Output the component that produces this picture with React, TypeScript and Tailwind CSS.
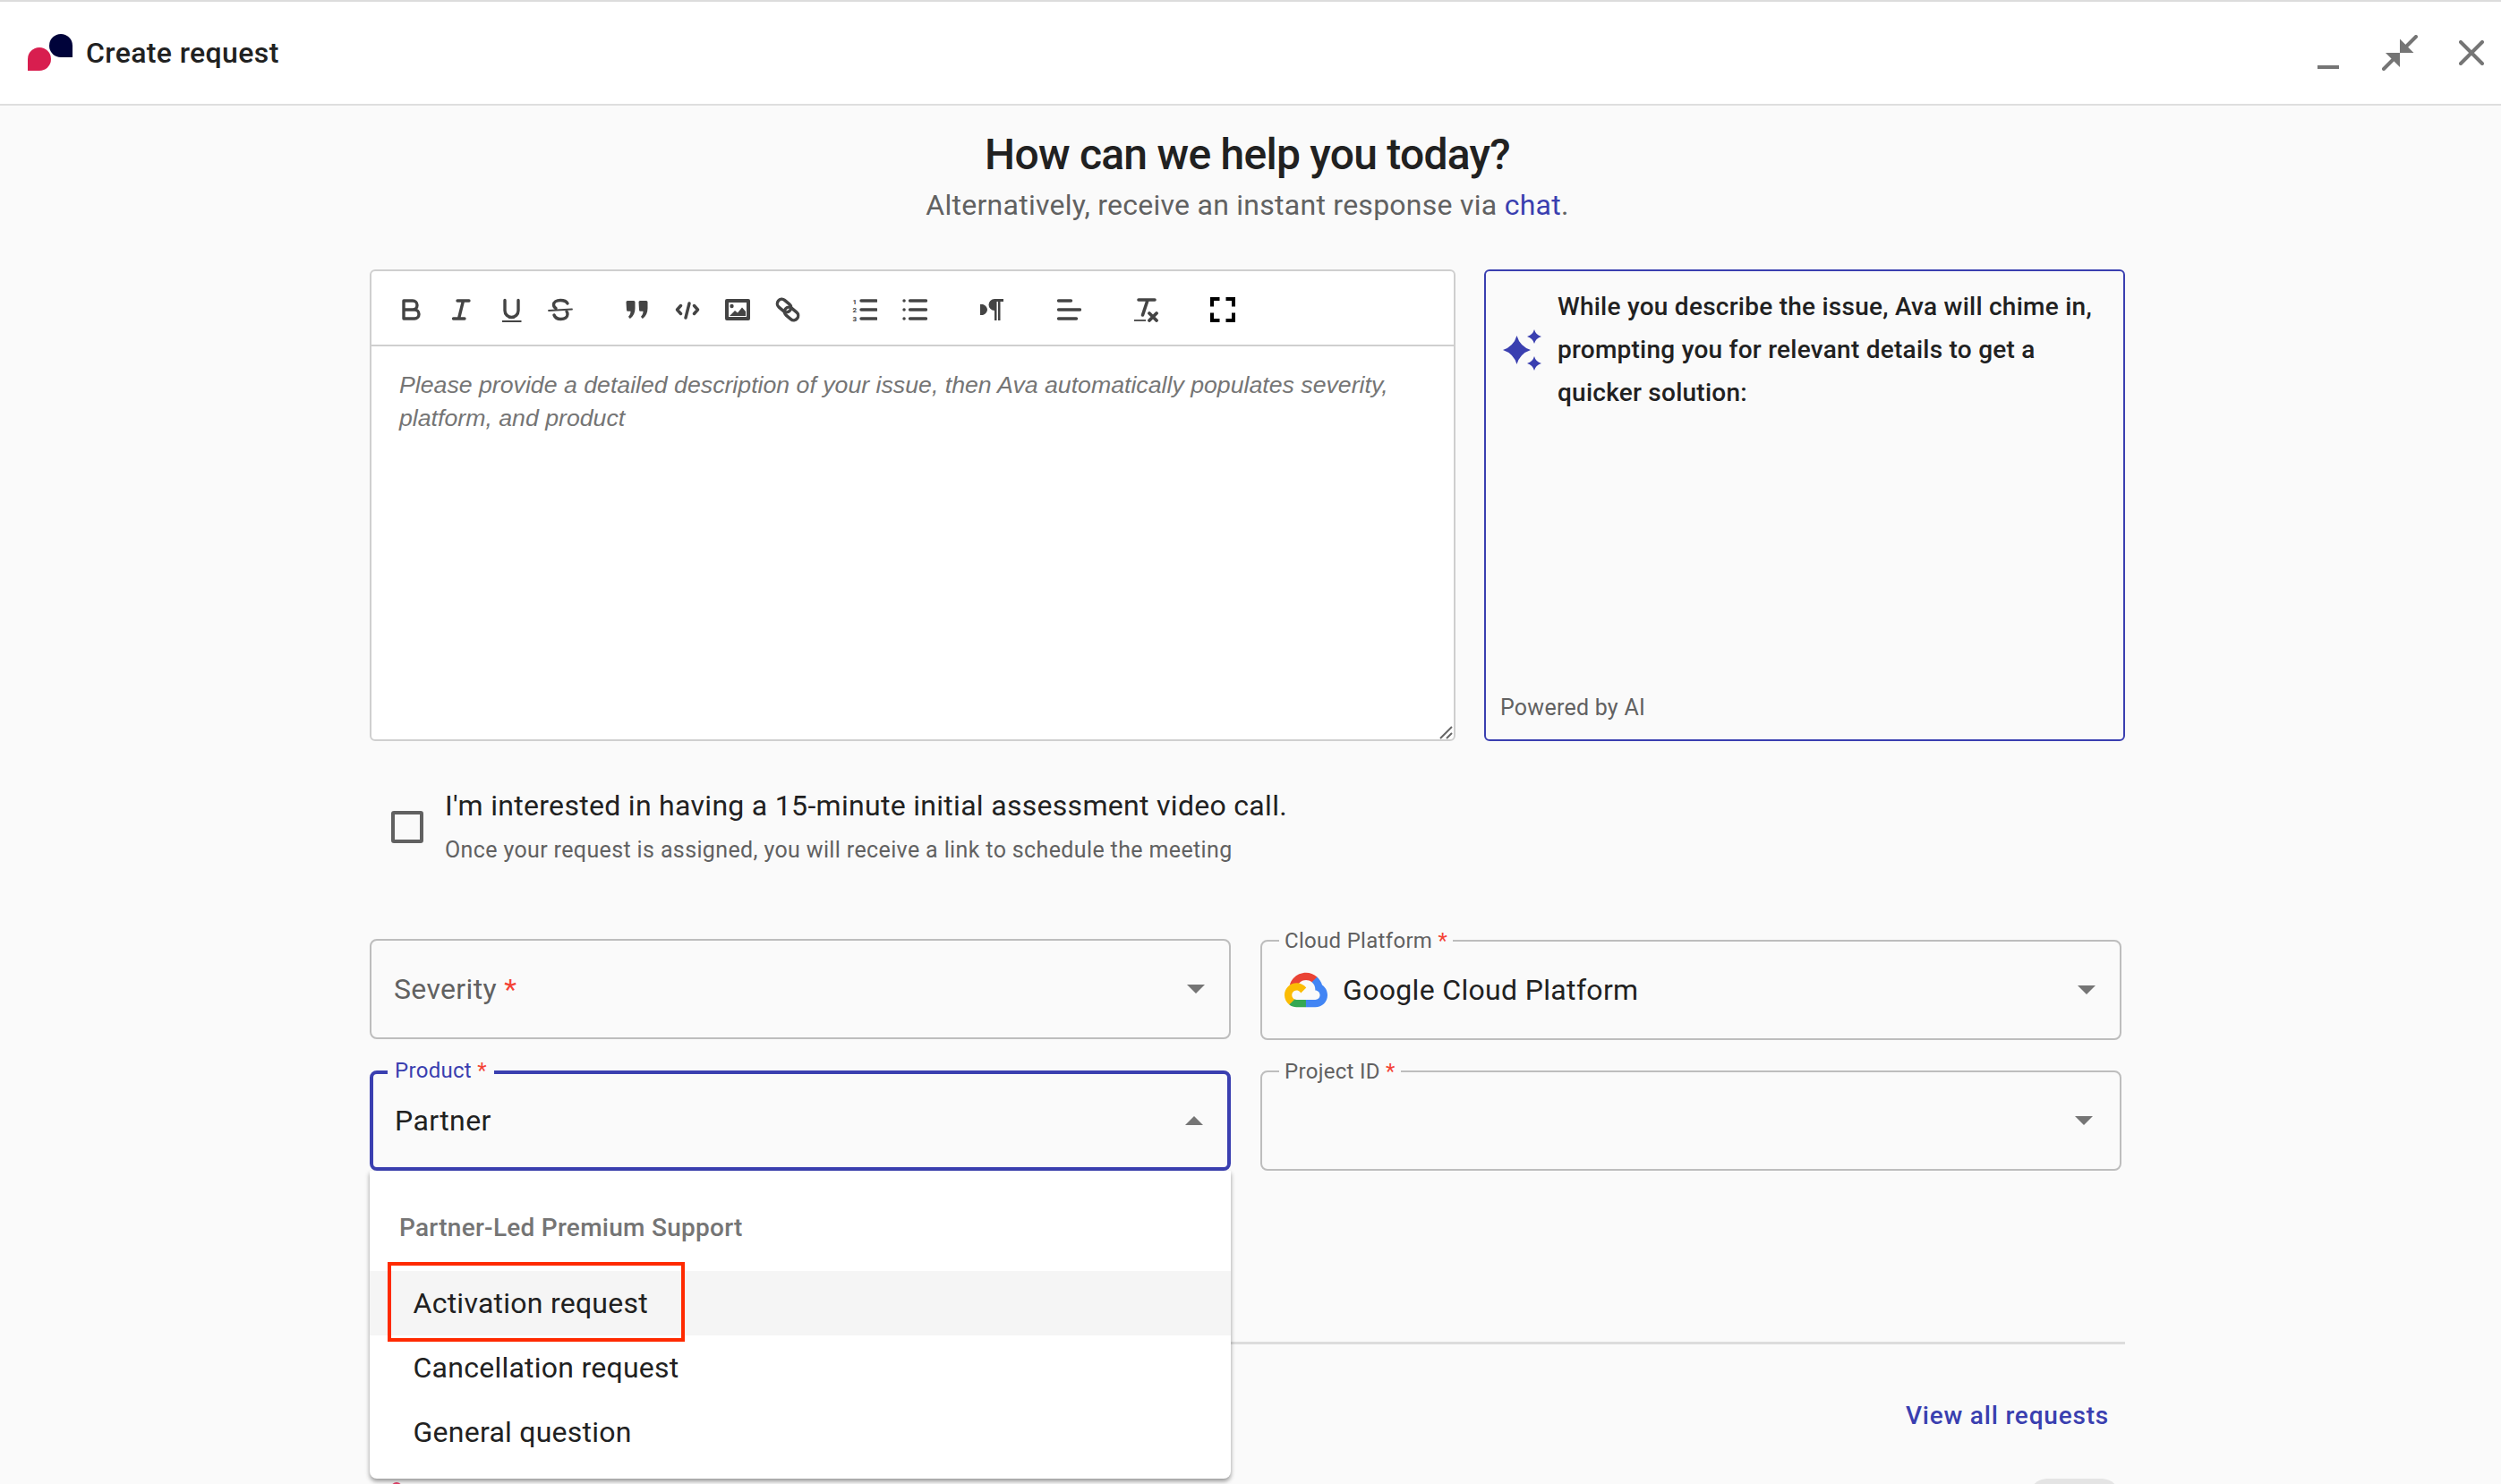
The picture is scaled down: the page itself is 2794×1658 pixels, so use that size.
import type { ReactNode } from 'react';

const I = ({ children, stroke = true }: { children: ReactNode; stroke?: boolean }) => (
  <svg
    width="28"
    height="28"
    viewBox="0 0 28 28"
    fill={stroke ? 'none' : '#444'}
    stroke={stroke ? '#444' : 'none'}
    strokeWidth="3.4"
    strokeLinecap="round"
    strokeLinejoin="round"
  >
    {children}
  </svg>
);

const toolbar: ReactNode[][] = [
  [
    <I><path d="M7 4H17a5 5 0 0 1 0 10H7ZM7 14H19a5 5 0 0 1 0 10H7Z" /></I>,
    <I><path d="M11 4H24M6.500 24H19M17.500 4L12.500 24" /></I>,
    <I>
      <path d="M8 3.500V15a7.500 7.500 0 0 0 15 0V3.500" />
      <path d="M5 27H26.500" strokeWidth="2" strokeLinecap="butt" />
    </I>,
    <I>
      <path d="M22 7C21 5 18 3.500 14 3.500C9.500 3.500 6.500 5.500 6.500 8.500C6.500 10 7.500 11.500 9 12.500M7 20C8 22.500 11 24.500 14.500 24.500C19 24.500 22 22.500 22 19C22 18 21.800 17 21 16" />
      <path d="M1 15L27 13.500" strokeWidth="1.800" />
    </I>,
  ],
  [
    <I stroke={false}>
      <path d="M1.500 5.500a1.500 1.500 0 0 1 1.500-1.500h7a1.500 1.500 0 0 1 1.500 1.500v7c0 5-2 8.500-5 11a1 1 0 0 1-1.500-.2l-1-1.500c1.500-1.500 2.500-3 2.500-6h-3a1.500 1.500 0 0 1-1.500-1.500z" />
      <path d="M15.500 5.500a1.500 1.500 0 0 1 1.500-1.500h7a1.500 1.500 0 0 1 1.500 1.500v7c0 5-2 8.500-5 11a1 1 0 0 1-1.500-.2l-1-1.500c1.500-1.500 2.500-3 2.500-6h-3a1.500 1.500 0 0 1-1.500-1.500z" />
    </I>,
    <I><path d="M6.500 9.500L2.500 14L6.500 18.500M16 7L12 23M21.500 9.500L25.500 14L21.500 18.500" /></I>,
    <I stroke={false}>
      <path
        fillRule="evenodd"
        d="M2 2h24a2 2 0 0 1 2 2v20a2 2 0 0 1-2 2H2a2 2 0 0 1-2-2V4a2 2 0 0 1 2-2ZM4 6v16h20V6Z"
      />
      <circle cx="7.500" cy="10" r="2.200" />
      <path d="M5 21l6-6 3 2.500 5-6 4 4.500v5z" />
    </I>,
    <I>
      <rect x="1.500" y="4.500" width="17" height="10" rx="5" transform="rotate(40 10 9.500)" />
      <rect x="9.500" y="13.500" width="17" height="10" rx="5" transform="rotate(40 18 18.500)" />
    </I>,
  ],
  [
    <I>
      <path d="M10 4H27M10 14H27M10 24H27" />
      <text x="0.500" y="8" fontSize="8" fontWeight="700" fill="#444" stroke="none" fontFamily="Roboto">1</text>
      <text x="0.500" y="17" fontSize="8" fontWeight="700" fill="#444" stroke="none" fontFamily="Roboto">2</text>
      <text x="0.500" y="27" fontSize="8" fontWeight="700" fill="#444" stroke="none" fontFamily="Roboto">3</text>
    </I>,
    <I>
      <path d="M8.500 4H26.500M8.500 14H26.500M8.500 24H26.500" />
      <path d="M2 4H2.100M2 14H2.100M2 24H2.100" />
    </I>,
  ],
  [
    <I stroke={false}>
      <path d="M1 8h3c3 1 5 3.500 5 6s-2 5-5 6H1z" />
      <path d="M27 2v3h-3.500v21h-2.500V5h-1.500v21h-2.500V15a6.500 6.500 0 0 1 0-13z" />
    </I>,
  ],
  [<I><path d="M2.500 4H16.500M2.500 14H26.500M2.500 24H22.500" /></I>],
  [
    <I>
      <path d="M6 3H24M16 3.500L10.500 20" strokeWidth="3.600" />
      <path d="M1 26H14" strokeWidth="1.800" strokeLinecap="butt" />
      <path d="M18 18L26 26M26 18L18 26" strokeWidth="3.800" />
    </I>,
  ],
  [
    <svg width="28" height="28" viewBox="0 0 28 28" fill="none" stroke="#000" strokeWidth="4">
      <path d="M2 10.500V2H10.500M17.500 2H26V10.500M26 17.500V26H17.500M10.500 26H2V17.500" />
    </svg>,
  ],
];

const Arrow = ({ up = false }: { up?: boolean }) => (
  <svg width="20" height="10" viewBox="0 0 20 10" fill="#757575">
    <path d={up ? 'M10 0L20 10H0Z' : 'M0 0H20L10 10Z'} />
  </svg>
);

const Req = () => <span className="text-[#f44336]"> *</span>;

const GoogleCloud = () => (
  <svg width="48" height="40" viewBox="0 0 256 206">
    <path fill="#EA4335" d="M170.252 56.819l22.253-22.253 1.483-9.37C153.482-11.61 89.038-7.43 52.494 33.974 42.343 45.474 34.812 59.814 30.798 74.622l7.97-1.123 44.506-7.34 3.436-3.514c19.797-21.741 53.271-24.666 76.13-6.166z" />
    <path fill="#4285F4" d="M224.205 73.918c-5.115-18.836-15.617-35.77-30.217-48.722l-31.232 31.232c13.188 10.776 20.702 27.009 20.38 44.037v5.544c15.35 0 27.796 12.444 27.796 27.794 0 15.352-12.445 27.479-27.796 27.479h-55.669l-5.465 5.933v33.34l5.465 5.231h55.669c39.928.311 72.549-31.493 72.86-71.421.189-24.203-11.745-46.892-31.791-60.446" />
    <path fill="#34A853" d="M71.87 205.796h55.59v-44.506H71.87c-3.961-.001-7.798-.852-11.4-2.5l-7.885 2.42-22.407 22.253-1.952 7.572c12.566 9.488 27.897 14.828 43.644 14.761" />
    <path fill="#FBBC05" d="M71.87 61.426C31.942 61.664-.23 94.222.009 134.15c.133 22.297 10.546 43.285 28.203 56.903l32.245-32.244c-13.99-6.321-20.208-22.787-13.887-36.777 6.32-13.99 22.787-20.208 36.776-13.888 6.165 2.785 11.104 7.725 13.889 13.888l32.245-32.244C115.715 71.936 94.4 61.315 71.87 61.426" />
  </svg>
);

const Field = ({
  label,
  children,
  className = '',
  arrowClass = 'pr-[27px]',
}: {
  label?: string;
  children?: ReactNode;
  className?: string;
  arrowClass?: string;
}) => (
  <div className={`relative h-[112px] rounded-lg border-2 border-[#bdbdbd] flex items-center justify-between pl-[25px] ${arrowClass} ${className}`}>
    {label && (
      <span className="absolute -top-[16px] left-[19px] bg-[#fafafa] px-[6px] text-[24px] leading-[30px] tracking-[0.3px] text-[#616161]">
        {label}
        <Req />
      </span>
    )}
    <div className="flex items-center gap-[17px] text-[32px] tracking-[0.33px] text-[#212121]">{children}</div>
    <Arrow />
  </div>
);

export default function App() {
  return (
    <div className="h-[1658px] w-[2794px] overflow-hidden bg-[#fafafa] font-[Roboto,sans-serif]">
      {/* Header */}
      <header className="flex h-[118px] items-center justify-between border-t-2 border-b-2 border-t-[#dcdcdc] border-b-[#dedede] bg-white pl-[31px] pr-[19px]">
        <div className="flex items-center gap-[15px]">
          <svg width="50" height="42" viewBox="0 0 50 42">
            <path fill="#d81e4f" d="M0 41V28a13 13 0 1 1 13 13Z" />
            <path fill="#00033a" d="M50 26V13a13 13 0 1 0-13 13Z" />
          </svg>
          <span className="text-[32px] font-medium tracking-[0.38px] text-[#212121]">Create request</span>
        </div>
        <div className="flex items-center">
          <span className="mr-[48px] mt-[32px] h-[4px] w-[24px] bg-[#757575]" />
          <svg className="mr-[46px]" width="40" height="40" viewBox="0 0 40 40" stroke="#757575" strokeWidth="4" strokeLinecap="round">
            <path d="M38 2L28 12M2 38L12 28" fill="none" />
            <path fill="#757575" stroke="none" d="M20 4.500V20H35.500ZM4 20H20V36Z" />
          </svg>
          <svg width="28" height="28" viewBox="0 0 28 28" stroke="#757575" strokeWidth="4" strokeLinecap="round">
            <path d="M2 2L26 26M26 2L2 26" />
          </svg>
        </div>
      </header>

      <main className="ml-[413px] w-[1961px]">
        <h1 className="mt-[27px] text-center text-[48px] font-medium leading-[56px] tracking-[-0.75px] text-[#212121]">How can we help you today?</h1>
        <p className="mt-[8px] text-center text-[32px] leading-[40px] tracking-[0.26px] text-[#616161]">
          Alternatively, receive an instant response via <span className="text-[#3a3fb0]">chat</span>.
        </p>

        <div className="mt-[52px] flex gap-[32px]">
          {/* Editor */}
          <div className="relative h-[527px] w-[1213px] rounded-md border-2 border-[#cfcfcf] bg-white">
            <div className="flex h-[84px] items-center border-b-2 border-[#cfcfcf] pl-[15px] pt-[4px]">
              {toolbar.map((group, i) => (
                <div key={i} className="flex first:ml-0 ml-[30px]">
                  {group.map((icon, j) => (
                    <span key={j} className="flex w-[56px] items-center justify-center">{icon}</span>
                  ))}
                </div>
              ))}
            </div>
            <p className="px-[31px] pt-[25px] font-['Liberation_Sans'] text-[26.7px] italic leading-[37px] text-[#757575]">
              Please provide a detailed description of your issue, then Ava automatically populates severity, platform, and product
            </p>
            <svg className="absolute bottom-0 right-[1px]" width="16" height="16" viewBox="0 0 16 16" stroke="#666" strokeWidth="2">
              <path d="M15 2L2 15M15 9L9 15" />
            </svg>
          </div>

          {/* Ava */}
          <div className="flex h-[527px] w-[716px] flex-col justify-between rounded-md border-2 border-[#3a3fb0] pb-[20px] pl-[16px] pr-[31px] pt-[16px]">
            <div className="flex items-center gap-[17px] pl-[3px]">
              <svg className="shrink-0" width="44" height="46" viewBox="0 0 44 46" fill="#3a3fb0">
                <path d="M15.500 7Q19 19 31 23Q19 27 15.500 39Q12 27 0 23Q12 19 15.500 7Z" />
                <path d="M35 0Q36.500 6 43 8Q36.500 10 35 16Q33.500 10 27 8Q33.500 6 35 0Z" />
                <path d="M35 30Q36.500 36 43 38Q36.500 40 35 46Q33.500 40 27 38Q33.500 36 35 30Z" />
              </svg>
              <p className="text-[28px] font-medium leading-[48px] tracking-[0.25px] text-[#212121]">
                While you describe the issue, Ava will chime in, prompting you for relevant details to get a quicker solution:
              </p>
            </div>
            <p className="text-[25px] leading-[30px] tracking-[0.25px] text-[#616161]">Powered by AI</p>
          </div>
        </div>

        {/* Video call */}
        <div className="mt-[52px] flex items-center gap-[24px] pl-[24px]">
          <span className="h-[36px] w-[36px] rounded-[3px] border-[4px] border-[#616161]" />
          <div>
            <p className="text-[32px] leading-[40px] tracking-[0.3px] text-[#212121]">I'm interested in having a 15-minute initial assessment video call.</p>
            <p className="mt-[12px] text-[25px] leading-[36px] tracking-[0.37px] text-[#616161]">Once your request is assigned, you will receive a link to schedule the meeting</p>
          </div>
        </div>

        {/* Fields */}
        <div className="mt-[81px] grid grid-cols-[962px_962px] gap-x-[33px] gap-y-[34px]">
          <Field>
            <span className="text-[#616161]">
              Severity
              <Req />
            </span>
          </Field>
          <Field label="Cloud Platform" className="mt-px">
            <GoogleCloud />
            Google Cloud Platform
          </Field>

          <div className="relative">
            <div className="flex h-[112px] items-center justify-between rounded-lg border-4 border-[#3a3fb0] pl-[24px] pr-[27px] text-[32px] tracking-[0.4px] text-[#212121]">
              Partner
              <Arrow up />
            </div>
            <span className="absolute -top-[15px] left-[20px] bg-[#fafafa] px-[8px] text-[24px] leading-[30px] tracking-[0.3px] text-[#3a3fb0]">
              Product
              <Req />
            </span>

            {/* Product menu */}
            <div className="absolute left-0 right-0 top-[112px] z-10 rounded-b-lg bg-white pb-[16px] shadow-[0_3px_5px_rgba(0,0,0,0.4)]">
              <p className="pb-[28px] pl-[33px] pt-[44px] text-[28px] font-medium leading-[40px] tracking-[0.27px] text-[#757575]">Partner-Led Premium Support</p>
              {['Activation request', 'Cancellation request', 'General question'].map((item, i) => (
                <div
                  key={item}
                  className={`flex h-[72px] items-center pl-[48.5px] text-[32px] tracking-[0.25px] text-[#212121] ${i === 0 ? 'bg-[#f5f5f5]' : ''}`}
                >
                  {item}
                </div>
              ))}
              <div className="absolute left-[20px] top-[102px] h-[89px] w-[332px] border-4 border-[#ff2a00]" />
            </div>
          </div>
          <Field label="Project ID" arrowClass="pr-[30px]" />
        </div>

        <div className="mt-[191px] h-[3px] bg-[#dcdcdc]" />
        <div className="mt-[62px] pr-[18px] text-right text-[28px] font-medium leading-[36px] tracking-[0.8px] text-[#3a3fb0]">View all requests</div>
        <div className="mt-[52px] flex items-start justify-between pr-[6px]">
          <span className="ml-[24px] mt-[4px] h-[12px] w-[12px] rounded-full bg-[#e8436b]" />
          <span className="h-[40px] w-[101px] rounded-[20px] bg-[#e4e4e4]" />
        </div>
      </main>
    </div>
  );
}
